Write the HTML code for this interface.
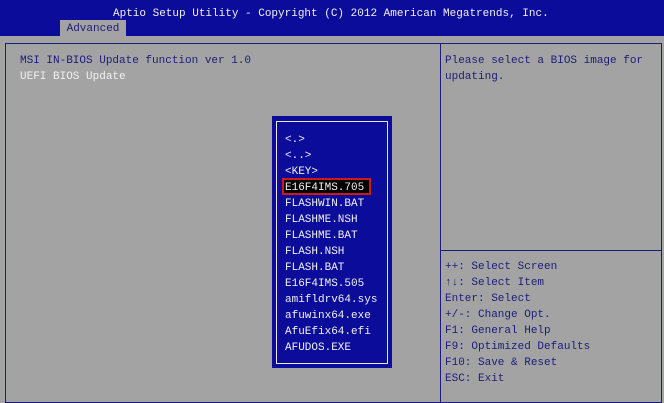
<!DOCTYPE html><html><head><style>
body{margin:0;width:664px;height:400px;background:#a3a3a3;position:relative;overflow:hidden;font-family:"Liberation Mono",monospace;font-size:11px;}
.a{position:absolute;white-space:pre;line-height:16px;}
.t{color:#1c1c7c}.w{color:#f0f0f0}
</style></head><body>
<div class="a" style="left:0;top:0;width:664px;height:36px;background:#0c0c9a"></div>
<div class="a w" style="left:113px;top:6px;">Aptio Setup Utility - Copyright (C) 2012 American Megatrends, Inc.</div>
<div class="a" style="left:60px;top:20px;width:66px;height:16px;background:#a3a3a3;color:#1c1c7c;text-align:center;line-height:18px">Advanced</div>
<div class="a" style="left:5px;top:43px;width:657px;height:360px;border:1px solid #1c1c7c;box-sizing:border-box"></div>
<div class="a" style="left:440px;top:43px;width:1px;height:360px;background:#1c1c7c"></div>
<div class="a" style="left:441px;top:250px;width:220px;height:1px;background:#1c1c7c"></div>
<div class="a t" style="left:20px;top:53px;">MSI IN-BIOS Update function ver 1.0</div>
<div class="a w" style="left:20px;top:69px;">UEFI BIOS Update</div>
<div class="a t" style="left:445px;top:53px;">Please select a BIOS image for
updating.</div>
<div class="a t" style="left:445px;top:259px;">++: Select Screen
↑↓: Select Item
Enter: Select
+/-: Change Opt.
F1: General Help
F9: Optimized Defaults
F10: Save &amp; Reset
ESC: Exit</div>
<div class="a" style="left:272px;top:116px;width:120px;height:252px;background:#0c0c9a"></div>
<div class="a" style="left:276px;top:121px;width:112px;height:243px;border:1px solid #e8e8e8;box-sizing:border-box"></div>
<div class="a" style="left:282px;top:178px;width:89px;height:17px;border:2px solid #d01818;box-sizing:border-box;background:#000"></div>
<div class="a w" style="left:285px;top:132px;">&lt;.&gt;
&lt;..&gt;
&lt;KEY&gt;
E16F4IMS.705
FLASHWIN.BAT
FLASHME.NSH
FLASHME.BAT
FLASH.NSH
FLASH.BAT
E16F4IMS.505
amifldrv64.sys
afuwinx64.exe
AfuEfix64.efi
AFUDOS.EXE</div>
</body></html>
